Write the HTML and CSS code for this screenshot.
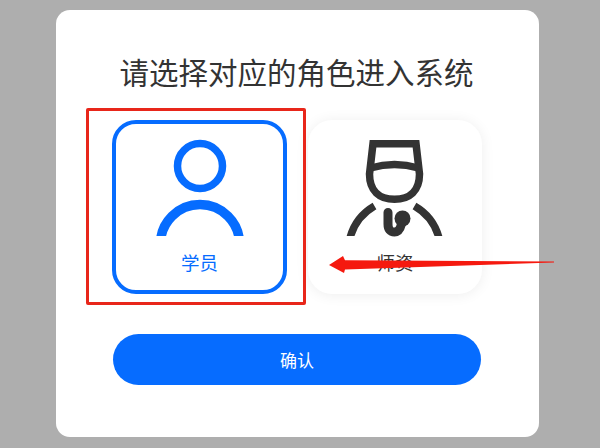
FILE: index.html
```html
<!DOCTYPE html>
<html lang="zh-CN">
<head>
<meta charset="utf-8">
<title>选择角色</title>
<link rel="stylesheet" href="styles.css">
</head>
<body>
<main class="panel">
  <h1 class="title">请选择对应的角色进入系统</h1>
  <div class="roles">
    <div class="role role-active">
      <svg class="role-icon" viewBox="150 138 100 100" aria-hidden="true">
        <defs><clipPath id="cutA"><rect x="150" y="138" width="100" height="98"/></clipPath></defs>
        <circle cx="200" cy="166" r="22.5" fill="none" stroke="currentColor" stroke-width="7.5"/>
        <circle cx="200" cy="244" r="39.5" fill="none" stroke="currentColor" stroke-width="9.5" clip-path="url(#cutA)"/>
      </svg>
      <div class="role-name">学员</div>
    </div>
    <div class="role role-plain">
      <svg class="role-icon" viewBox="345.5 138 100 100" aria-hidden="true">
        <defs><clipPath id="cutB"><rect x="340" y="138" width="110" height="98"/></clipPath></defs>
        <g fill="none" stroke="currentColor" stroke-width="7.5" clip-path="url(#cutB)">
          <path d="M373.5 143.7H416.5L420 174C420 191 410 199.3 395 199.3C380 199.3 370 191 370 174Z"/>
          <path d="M371 168Q395 161 419 168"/>
          <path d="M375 206Q356 217 350.5 238"/>
          <path d="M415 206Q434 217 439.5 238"/>
        </g>
        <path d="M388.5 212.5V224Q388.5 232 395 232Q400 232 402 224" fill="none" stroke="currentColor" stroke-width="9" stroke-linecap="round"/>
        <circle cx="403" cy="218.5" r="8" fill="currentColor"/>
      </svg>
      <div class="role-name">师资</div>
    </div>
  </div>
  <button class="confirm" type="button">确认</button>
</main>
<div class="mark-box"></div>
<svg class="mark-arrow" viewBox="0 0 600 448" aria-hidden="true">
  <polygon points="329,265 343,256 345,260.3 554,261.5 554,262.5 345,269.5 344,273"/>
</svg>
</body>
</html>
```

FILE: styles.css
```css
* { box-sizing: border-box; }

html, body {
  margin: 0;
  height: 448px;
  overflow: hidden;
}

body {
  position: relative;
  background: #aeaeae;
  font-family: "Noto Sans CJK SC", "Liberation Sans", sans-serif;
  color: #333;
  padding: 10px 0 0 56px;
}

.panel {
  width: 483px;
  height: 427px;
  background: #fff;
  border-radius: 14px;
  padding: 39px 0 0 56px;
}

.title {
  margin: 0 0 27px -57px;
  width: 483px;
  text-align: center;
  font-size: 29.5px;
  font-weight: 400;
  line-height: 44px;
  color: #333;
}

.roles {
  display: flex;
  gap: 21px;
}

.role {
  width: 175px;
  height: 174px;
  border: 4px solid transparent;
  border-radius: 24px;
  padding-top: 14px;
  background: #fff;
  display: flex;
  flex-direction: column;
  align-items: center;
  color: #333;
}

.role-plain {
  border: 0;
  width: 174px;
  padding-top: 18px;
  box-shadow: 0 1px 14px rgba(0, 0, 0, 0.07);
}

.role-active {
  border-color: #066cff;
  color: #066cff;
}

.role-icon {
  display: block;
  width: 100px;
  height: 100px;
  flex: none;
}

.role-name {
  margin-top: 11px;
  font-size: 18.5px;
  line-height: 26px;
}

.confirm {
  display: block;
  width: 368px;
  height: 51px;
  margin: 40px 0 0 1px;
  border: 0;
  border-radius: 26px;
  background: #066cff;
  color: #fff;
  font-family: inherit;
  font-size: 17px;
  padding: 0;
}

.mark-box {
  position: absolute;
  left: 86px;
  top: 108px;
  width: 220px;
  height: 197px;
  border: 3px solid #e8261a;
  border-radius: 2px;
}

.mark-arrow {
  position: absolute;
  left: 0;
  top: 0;
  width: 600px;
  height: 448px;
}

.mark-arrow polygon {
  fill: #f5190f;
}
```
